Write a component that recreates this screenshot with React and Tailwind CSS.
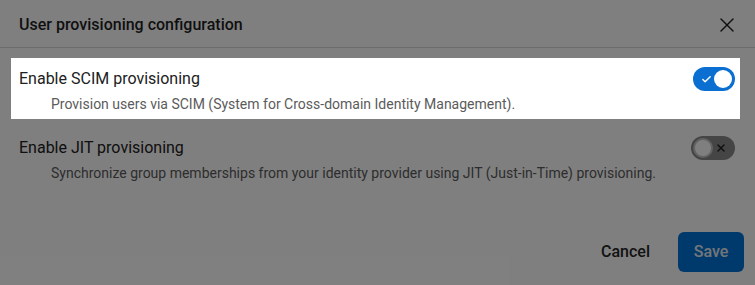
import { X, Check } from 'lucide-react'

function Toggle({ on }) {
  return on ? (
    <div className="w-[42px] h-6 rounded-full bg-[#0b6fd1] flex items-center justify-between pl-2 pr-[3px] shrink-0">
      <Check size={11} strokeWidth={3} className="text-white" />
      <div className="w-[18px] h-[18px] rounded-full bg-white" />
    </div>
  ) : (
    <div className="w-[44px] h-6 rounded-full bg-[#8a8a8a] flex items-center justify-between pl-[2px] pr-2 shrink-0">
      <div className="w-5 h-5 rounded-full bg-white border-2 border-[#c4c4c4]" />
      <X size={12} strokeWidth={3} className="text-[#1f1f1f]" />
    </div>
  )
}

function Row({ title, description, on, spotlight }) {
  return (
    <div className={`pl-2 pr-[5px] pt-[9px] pb-[5px] ${spotlight ? 'relative z-10 bg-white' : ''}`}>
      <div className="flex items-center justify-between">
        <span className="text-base leading-6 text-[#212121]">{title}</span>
        <Toggle on={on} />
      </div>
      <p className="mt-[3px] pl-8 text-sm leading-5 text-[#5b5b5b]">{description}</p>
    </div>
  )
}

export default function App() {
  return (
    <div className="relative w-[755px] h-[285px] bg-white overflow-hidden" style={{ fontFamily: 'Roboto, sans-serif' }}>
      <div className="h-12 border-b border-[#d8d8d8] flex items-center justify-between pl-[19px] pr-4 pt-0.5">
        <h2 className="text-base font-medium text-[#1f1f1f]">User provisioning configuration</h2>
        <X size={24} strokeWidth={1.4} className="text-[#1f1f1f]" />
      </div>

      <div className="pl-[11px] pr-[15px] pt-[10px] flex flex-col gap-2">
        <Row
          spotlight
          on
          title="Enable SCIM provisioning"
          description="Provision users via SCIM (System for Cross-domain Identity Management)."
        />
        <Row
          on={false}
          title="Enable JIT provisioning"
          description="Synchronize group memberships from your identity provider using JIT (Just-in-Time) provisioning."
        />
      </div>

      <div className="absolute bottom-[13px] right-[11px] flex items-center gap-3">
        <button className="h-10 px-4 text-base font-medium text-[#262626]">Cancel</button>
        <button className="h-10 w-[66px] rounded-md bg-[#0074d8] text-base font-medium text-[#e6ecf3]">Save</button>
      </div>

      <div className="absolute inset-0 z-[5] bg-black/50" />
    </div>
  )
}
